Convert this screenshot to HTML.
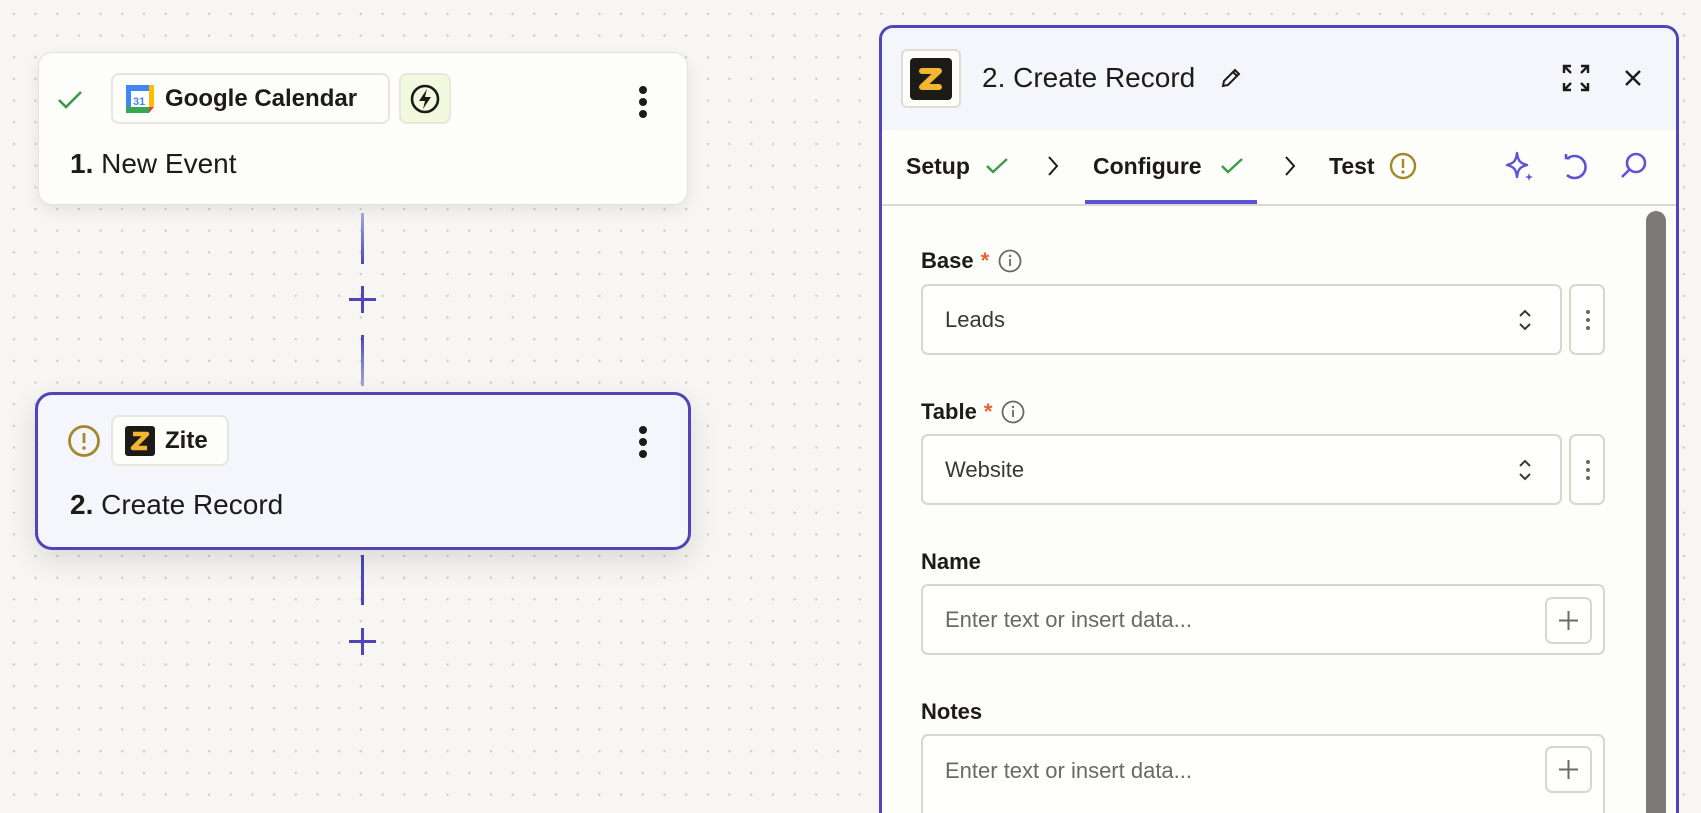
<!DOCTYPE html>
<html style="width:1701px;height:813px;overflow:hidden"><head><meta charset="utf-8"><style>
*{box-sizing:border-box;margin:0;padding:0}
body{width:1701px;height:813px;overflow:hidden;position:relative;font-family:"Liberation Sans",sans-serif;color:#1d1b18;
background-color:#f7f6f2;background-image:radial-gradient(circle,#cfcdc6 1.1px,transparent 1.4px);background-size:21.7px 21.7px;background-position:3px 3px}
.abs{position:absolute}
.card{position:absolute;border-radius:14px}
.pill{position:absolute;height:51px;border:2px solid #e8e6de;border-radius:8px;background:#fdfdf9;display:flex;align-items:center;font-weight:bold;font-size:24px}
.kebab{position:absolute;width:8px}
.kebab i{display:block;width:8px;height:8px;border-radius:50%;background:#1d1b18;margin-bottom:4px}
.line{position:absolute;left:361px;width:3px;background:#4f45b8}
.plus{position:absolute;left:348px;width:29px;height:29px}
.panel{position:absolute;left:879px;top:25px;width:800px;height:810px;border:3px solid #5046bc;border-bottom:none;border-radius:14px 14px 0 0;background:#fdfdf9;overflow:hidden}
.hdr{position:absolute;left:0;top:0;width:100%;height:102px;background:#f5f5fc}
.tab{position:absolute;top:140px;font-size:23px;font-weight:bold;line-height:1}
.lbl{position:absolute;left:921px;font-size:22px;font-weight:bold;display:flex;align-items:center}
.inp{position:absolute;left:921px;width:641px;height:71px;border:2px solid #d8d6ce;border-radius:7px;background:#fefefc;font-size:22px;display:flex;align-items:center;padding-left:22px;color:#3a3835}
.kb{position:absolute;left:1569px;width:36px;height:71px;border:2px solid #d8d6ce;border-radius:7px;background:#fefefc}
.kb i{position:absolute;left:15px;width:4px;height:4px;border-radius:50%;background:#666}
</style></head><body>

<div class="card" style="left:38px;top:52px;width:650px;height:153px;background:#fdfdf9;border:1px solid #e4e2da;box-shadow:0 6px 16px rgba(0,0,0,0.08)"></div>
<svg class="abs" style="left:56px;top:88px" width="28" height="24" viewBox="0 0 28 24"><path d="M3 12 L10 19 L25 4" fill="none" stroke="#3c9a4a" stroke-width="2.6"/></svg>
<div class="pill" style="left:111px;top:73px;width:279px;padding-left:12px">
<svg width="30" height="30" viewBox="0 0 30 30"><rect x="1" y="1" width="28" height="28" rx="3" fill="#fff"/><rect x="1" y="1" width="28" height="6" fill="#4285f4"/><rect x="1" y="1" width="5" height="28" fill="#4285f4"/><rect x="24" y="1" width="5" height="22" fill="#fbbc04"/><rect x="1" y="23" width="23" height="6" fill="#34a853"/><path d="M24 23 L29 23 L24 29Z" fill="#ea4335"/><text x="8" y="21" font-size="11" fill="#4285f4" font-family="Liberation Sans">31</text></svg>
<span style="margin-left:10px">Google Calendar</span></div>
<div class="pill" style="left:399px;top:73px;width:52px;background:#f3f9df;justify-content:center">
<svg width="32" height="32" viewBox="0 0 32 32"><circle cx="16" cy="16" r="13" fill="none" stroke="#1d1b18" stroke-width="2.6"/><path d="M18 6 L10 18 H16 L14 26 L22 14 H16Z" fill="#1d1b18"/></svg></div>
<div class="kebab" style="left:639px;top:86px"><i></i><i></i><i></i></div>
<div class="abs" style="left:70px;top:148px;font-size:28px"><b>1.</b> New Event</div>

<div class="line" style="top:213px;height:51px;background:linear-gradient(#a9a4dc,#4f45b8)"></div>
<svg class="plus" style="top:285px" viewBox="0 0 29 29"><path d="M14.5 1V28M1 14.5H28" stroke="#4f45b8" stroke-width="3"/></svg>
<div class="line" style="top:335px;height:51px;background:linear-gradient(#4f45b8,#a9a4dc)"></div>
<div class="line" style="top:555px;height:50px"></div>
<svg class="plus" style="top:627px" viewBox="0 0 29 29"><path d="M14.5 1V28M1 14.5H28" stroke="#4f45b8" stroke-width="3"/></svg>

<div class="card" style="left:35px;top:392px;width:656px;height:158px;background:#f5f5fc;border:3px solid #4f45b8;border-radius:17px;box-shadow:0 10px 30px rgba(0,0,0,0.12)"></div>
<svg class="abs" style="left:67px;top:424px" width="34" height="34" viewBox="0 0 34 34"><circle cx="17" cy="17" r="14.5" fill="none" stroke="#a4892b" stroke-width="2.8"/><path d="M17 9V19" stroke="#a4892b" stroke-width="2.8"/><circle cx="17" cy="24" r="1.8" fill="#a4892b"/></svg>
<div class="pill" style="left:111px;top:415px;width:118px;padding-left:12px">
<svg width="30" height="30" viewBox="0 0 30 30"><rect width="30" height="30" rx="3" fill="#1d1b18"/><path d="M8 8H22L8 22H22" fill="none" stroke="#f2b632" stroke-width="4.5" stroke-linejoin="round"/></svg>
<span style="margin-left:10px">Zite</span></div>
<div class="kebab" style="left:639px;top:426px"><i></i><i></i><i></i></div>
<div class="abs" style="left:70px;top:489px;font-size:28px"><b>2.</b> Create Record</div>

<div class="panel">
<div class="hdr"></div>
<div class="abs" style="left:0;top:176px;width:100%;height:2px;background:#dad8d0"></div>
<div class="abs" style="left:203px;top:172px;width:172px;height:4px;background:#5b52d6"></div>
</div>
<div class="abs" style="left:901px;top:49px;width:60px;height:59px;border:2px solid #dedcd4;border-radius:6px;background:#fdfdf9"></div>
<svg class="abs" style="left:910px;top:58px" width="42" height="42" viewBox="0 0 42 42"><rect width="42" height="42" rx="4" fill="#1d1b18"/><path d="M12 13H29L12 29H29" fill="none" stroke="#f2b632" stroke-width="6" stroke-linejoin="round" stroke-linecap="round"/></svg>
<div class="abs" style="left:982px;top:62px;font-size:28px">2. Create Record</div>
<svg class="abs" style="left:1219px;top:66px" width="24" height="24" viewBox="0 0 24 24"><path d="M4 20L5 15L16 4L20 8L9 19Z M14 6L18 10" fill="none" stroke="#1d1b18" stroke-width="2"/></svg>
<svg class="abs" style="left:1562px;top:64px" width="28" height="28" viewBox="0 0 28 28"><path d="M2 9V2H9M2 2L9 9M19 2H26V9M26 2L19 9M2 19V26H9M2 26L9 19M26 19V26H19M26 26L19 19" fill="none" stroke="#1d1b18" stroke-width="2.4"/></svg>
<svg class="abs" style="left:1624px;top:69px" width="18" height="18" viewBox="0 0 18 18"><path d="M2 2L16 16M16 2L2 16" stroke="#1d1b18" stroke-width="2.4"/></svg>

<div class="tab" style="left:906px;top:155px">Setup</div>
<svg class="abs" style="left:985px;top:156px" width="24" height="20" viewBox="0 0 24 20"><path d="M2 10L8 16L22 3" fill="none" stroke="#3c9a4a" stroke-width="2.4"/></svg>
<svg class="abs" style="left:1046px;top:155px" width="14" height="22" viewBox="0 0 14 22"><path d="M3 2L11 11L3 20" fill="none" stroke="#1d1b18" stroke-width="2"/></svg>
<div class="tab" style="left:1093px;top:155px">Configure</div>
<svg class="abs" style="left:1220px;top:156px" width="24" height="20" viewBox="0 0 24 20"><path d="M2 10L8 16L22 3" fill="none" stroke="#3c9a4a" stroke-width="2.4"/></svg>
<svg class="abs" style="left:1283px;top:155px" width="14" height="22" viewBox="0 0 14 22"><path d="M3 2L11 11L3 20" fill="none" stroke="#1d1b18" stroke-width="2"/></svg>
<div class="tab" style="left:1329px;top:155px">Test</div>
<svg class="abs" style="left:1389px;top:152px" width="28" height="28" viewBox="0 0 28 28"><circle cx="14" cy="14" r="12" fill="none" stroke="#a4892b" stroke-width="2.4"/><path d="M14 7V16" stroke="#a4892b" stroke-width="2.4"/><circle cx="14" cy="20" r="1.6" fill="#a4892b"/></svg>
<svg class="abs" style="left:1504px;top:150px" width="32" height="32" viewBox="0 0 32 32"><path d="M13 3C14 11 16 13 23 15C16 17 14 19 13 27C12 19 10 17 3 15C10 13 12 11 13 3Z" fill="none" stroke="#5b52d6" stroke-width="2.4" stroke-linejoin="round"/><path d="M25 23L26 26L29 27L26 28L25 31L24 28L21 27L24 26Z" fill="#5b52d6"/></svg>
<svg class="abs" style="left:1562px;top:151px" width="28" height="30" viewBox="0 0 28 30"><path d="M7 5H3V1M4 6A11 11 0 1 1 4 22" fill="none" stroke="#5b52d6" stroke-width="2.6" transform="translate(1,2)"/></svg>
<svg class="abs" style="left:1619px;top:151px" width="30" height="30" viewBox="0 0 30 30"><circle cx="17" cy="12" r="9" fill="none" stroke="#5b52d6" stroke-width="2.6"/><path d="M10 19L3 26" stroke="#5b52d6" stroke-width="2.6"/></svg>

<div class="abs" style="left:1646px;top:211px;width:20px;height:602px;border-radius:10px 10px 0 0;background:#7b7a78"></div>

<div class="lbl" style="top:248px">Base<span style="color:#e8622c;margin-left:7px">*</span>
<svg style="margin-left:9px" width="24" height="24" viewBox="0 0 24 24"><circle cx="12" cy="12" r="10.5" fill="none" stroke="#6b6965" stroke-width="1.8"/><path d="M12 10V17" stroke="#6b6965" stroke-width="1.8"/><circle cx="12" cy="7" r="1.2" fill="#6b6965"/></svg></div>
<div class="inp" style="top:284px">Leads</div>
<svg class="abs" style="left:1517px;top:307px" width="16" height="26" viewBox="0 0 16 26"><path d="M3 9L8 4L13 9M3 17L8 22L13 17" fill="none" stroke="#3a3835" stroke-width="2"/></svg>
<div class="kb" style="top:284px"><i style="top:24px"></i><i style="top:32px"></i><i style="top:40px"></i></div>

<div class="lbl" style="top:399px">Table<span style="color:#e8622c;margin-left:7px">*</span>
<svg style="margin-left:9px" width="24" height="24" viewBox="0 0 24 24"><circle cx="12" cy="12" r="10.5" fill="none" stroke="#6b6965" stroke-width="1.8"/><path d="M12 10V17" stroke="#6b6965" stroke-width="1.8"/><circle cx="12" cy="7" r="1.2" fill="#6b6965"/></svg></div>
<div class="inp" style="top:434px">Website</div>
<svg class="abs" style="left:1517px;top:457px" width="16" height="26" viewBox="0 0 16 26"><path d="M3 9L8 4L13 9M3 17L8 22L13 17" fill="none" stroke="#3a3835" stroke-width="2"/></svg>
<div class="kb" style="top:434px"><i style="top:24px"></i><i style="top:32px"></i><i style="top:40px"></i></div>

<div class="lbl" style="top:549px">Name</div>
<div class="inp" style="top:584px;width:684px;color:#6b6965">Enter text or insert data...</div>
<div class="abs" style="left:1545px;top:597px;width:47px;height:47px;border:2px solid #d8d6ce;border-radius:7px"></div>
<svg class="abs" style="left:1558px;top:610px" width="21" height="21" viewBox="0 0 21 21"><path d="M10.5 1V20M1 10.5H20" stroke="#6b6965" stroke-width="2"/></svg>

<div class="lbl" style="top:699px">Notes</div>
<div class="inp" style="top:734px;width:684px;height:79px;border-bottom:none;border-radius:7px 7px 0 0;align-items:flex-start;padding-top:22px;color:#6b6965">Enter text or insert data...</div>
<div class="abs" style="left:1545px;top:746px;width:47px;height:47px;border:2px solid #d8d6ce;border-radius:7px"></div>
<svg class="abs" style="left:1558px;top:759px" width="21" height="21" viewBox="0 0 21 21"><path d="M10.5 1V20M1 10.5H20" stroke="#6b6965" stroke-width="2"/></svg>
</body></html>
